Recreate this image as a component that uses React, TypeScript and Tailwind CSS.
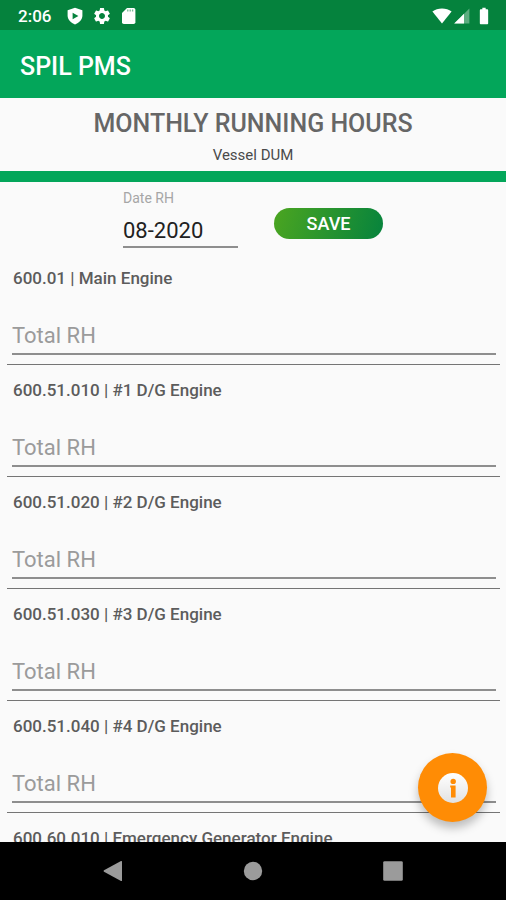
import { useState } from "react"
import { MdBatteryFull, MdSettings } from "react-icons/md"

const engines = [
    { code: "600.01", name: "Main Engine" },
    { code: "600.51.010", name: "#1 D/G Engine" },
    { code: "600.51.020", name: "#2 D/G Engine" },
    { code: "600.51.030", name: "#3 D/G Engine" },
    { code: "600.51.040", name: "#4 D/G Engine" },
    { code: "600.60.010", name: "Emergency Generator Engine" },
]

const StatusBar = () => {
    return (
        <div className="flex h-[30px] shrink-0 items-center justify-between bg-[#05823d] pl-[18px] pr-3 pt-px text-white">
            <div className="flex items-center">
                <span className="w-12 text-[17px] font-medium leading-6">2:06</span>
                <svg className="mr-2 h-[18px] w-[18px]" viewBox="0 0 18 18">
                    <path fill="currentColor" d="M9 0.8 16.4 3.2V8.6C16.4 12.8 13 16 9 17.4 5 16 1.6 12.8 1.6 8.6V3.2Z" />
                    <path fill="#05823d" d="M6.6 5.8 12.4 9 6.6 12.2Z" />
                </svg>
                <MdSettings className="mr-2" size={20} />
                <svg className="h-[18px] w-[18px]" viewBox="0 0 18 18">
                    <path fill="currentColor" d="M7 1H13.6Q15.4 1 15.4 2.8V15.2Q15.4 17 13.6 17H3.8Q2 17 2 15.2V6Z" />
                    <path stroke="#05823d" strokeOpacity="0.55" strokeWidth="1.3" d="M7.8 2.6V4.4M10.2 2.6V4.4M12.6 2.6V4.4" />
                </svg>
            </div>
            <div className="flex items-center">
                <svg className="h-4 w-5" viewBox="0 0 20 16">
                    <path fill="currentColor" d="M10 15.6 0.4 3.6Q4.4 0.4 10 0.4T19.6 3.6Z" />
                </svg>
                <svg className="ml-0.5 mr-1 h-4 w-4" viewBox="0 0 16 16">
                    <path fill="currentColor" fillOpacity="0.35" d="M15.4 0.4V15.6H0.2Z" />
                    <path fill="currentColor" d="M10 5.8V15.6H0.2Z" />
                </svg>
                <MdBatteryFull size={20} />
            </div>
        </div>
    )
}

const EngineRow = ({ code, name }: { code: string; name: string }) => {
    return (
        <li className="ml-[7px] mr-[6px] border-b border-[#757575] pb-[9px] pl-[5px] pr-1 pt-[13px]">
            <label htmlFor={code} className="block whitespace-nowrap pl-px text-[17px] font-medium leading-6 text-[#5c5c5c]">
                {code} | {name}
            </label>
            <input
                id={code}
                type="text"
                inputMode="numeric"
                placeholder="Total RH"
                className="mt-[29px] block h-9 w-full border-b-2 border-[#8e8e8e] bg-transparent pb-0.5 text-[22px] text-[#212121] outline-none placeholder:text-[#9b9b9b]"
            />
        </li>
    )
}

const NavBar = () => {
    return (
        <nav className="flex h-[58px] shrink-0 items-center justify-center gap-[116px] bg-black text-[#9b9b9b]">
            <button type="button" aria-label="Back">
                <svg className="h-6 w-6" viewBox="0 0 24 24">
                    <path fill="currentColor" d="M21 2.6V21.4Q21 22.4 20 21.9L3 12.7Q2 12 3 11.3L20 2.1Q21 1.6 21 2.6Z" />
                </svg>
            </button>
            <button type="button" aria-label="Home">
                <svg className="h-6 w-6" viewBox="0 0 24 24">
                    <circle cx="12" cy="12" r="9.2" fill="currentColor" />
                </svg>
            </button>
            <button type="button" aria-label="Recent apps">
                <svg className="h-6 w-6" viewBox="0 0 24 24">
                    <rect x="2.2" y="2.2" width="19.6" height="19.6" rx="1.4" fill="currentColor" />
                </svg>
            </button>
        </nav>
    )
}

const App = () => {
    const [date, setDate] = useState("08-2020")

    return (
        <div className="flex h-dvh flex-col overflow-hidden bg-[#fafafa] font-[Roboto,sans-serif]">
            <StatusBar />
            <header className="flex h-[68px] shrink-0 items-center bg-[#03a65a] px-5 pt-1.5">
                <h1 className="text-[25px] font-medium leading-8 text-white">SPIL PMS</h1>
            </header>
            <main className="relative flex min-h-0 flex-1 flex-col">
                <section className="shrink-0 border-b-[11px] border-[#03a65a] pb-1 pt-[10px] text-center">
                    <h2 className="text-[25px] font-medium leading-8 text-[#666666]">MONTHLY RUNNING HOURS</h2>
                    <p className="mt-[3px] text-[15px] leading-6 text-[#4a4a4a]">Vessel DUM</p>
                </section>
                <form className="flex shrink-0 justify-center gap-9 pb-[5px] pt-1" onSubmit={(e) => e.preventDefault()}>
                    <div className="w-[115px]">
                        <label htmlFor="date" className="block text-[14px] leading-6 text-[#a6a6a6]">Date RH</label>
                        <input
                            id="date"
                            type="text"
                            value={date}
                            onChange={(e) => setDate(e.target.value)}
                            className="mt-1 block h-[34px] w-full border-b-2 border-[#8e8e8e] bg-transparent text-[22px] text-[#212121] outline-none"
                        />
                    </div>
                    <button type="submit" className="mt-[22px] h-[31px] w-[109px] rounded-full bg-linear-[105deg] from-[#4ba520] to-[#06833d] text-[18px] font-medium text-white">
                        SAVE
                    </button>
                </form>
                <ul className="min-h-0 flex-1 overflow-y-auto [scrollbar-width:none]">
                    {engines.map((engine) => (
                        <EngineRow key={engine.code} code={engine.code} name={engine.name} />
                    ))}
                </ul>
                <button
                    type="button"
                    aria-label="Information"
                    className="absolute bottom-5 right-[19px] flex h-[69px] w-[69px] items-center justify-center rounded-full bg-[#ff8c05] shadow-[0_6px_10px_rgba(0,0,0,0.25)]"
                >
                    <svg className="h-8 w-8" viewBox="0 0 32 32">
                        <defs>
                            <linearGradient id="disc" x1="0" y1="0" x2="0" y2="1">
                                <stop offset="0" stopColor="#ffffff" />
                                <stop offset="1" stopColor="#e2e2e2" />
                            </linearGradient>
                        </defs>
                        <circle cx="16" cy="16" r="15" fill="url(#disc)" />
                        <circle cx="16.2" cy="9.4" r="2.7" fill="#ff8c05" />
                        <path fill="#ff8c05" d="M13.2 13.4H18.6V25.4H14V15.6H13.2Z" />
                    </svg>
                </button>
            </main>
            <NavBar />
        </div>
    )
}

export default App
